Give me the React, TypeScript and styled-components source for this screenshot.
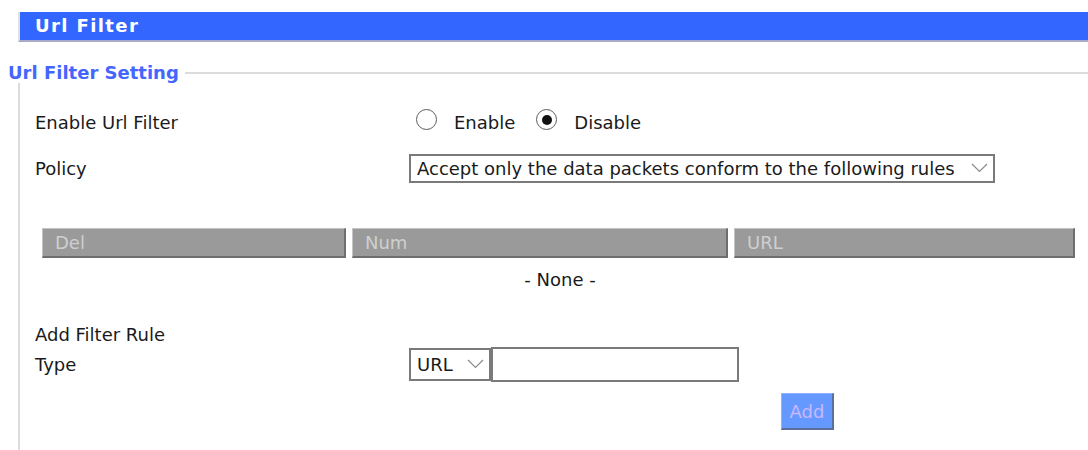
import React, { useState } from 'react'
import styled, { createGlobalStyle } from 'styled-components'

const GlobalStyle = createGlobalStyle`
  html, body {
    margin: 0;
    padding: 0;
    background: #ffffff;
  }
  body {
    font-family: 'DejaVu Sans', Verdana, sans-serif;
    color: #1a1a1a;
    font-size: 18px;
  }
`

const Page = styled.div`
  padding-top: 12px;
  width: 1088px;
  height: 450px;
  overflow: hidden;
`

const TitleBar = styled.div`
  margin-left: 18px;
  height: 28px;
  background: #3366ff;
  border-left: 2px solid #e0e0e0;
  border-bottom: 2px solid #a8aac8;
  color: #ffffff;
  font-weight: bold;
  font-size: 18px;
  line-height: 28px;
  padding-left: 15px;
  letter-spacing: 1.4px;
`

const Fieldset = styled.fieldset`
  margin: 20px 0 0 18px;
  padding: 16px 0 0 15px;
  border: none;
  border-top: 2px solid #dcdcdc;
  border-left: 2px solid #dcdcdc;
  min-height: 400px;
`

const Legend = styled.legend`
  margin-left: -27px;
  padding: 0 6px 0 0;
  color: #4466ff;
  font-weight: bold;
  font-size: 18px;
  line-height: 21px;
`

const FormRow = styled.div<{ $height: number }>`
  display: grid;
  grid-template-columns: 374px 1fr;
  align-items: center;
  height: ${(p) => p.$height}px;
`

const Label = styled.div`
  line-height: 22px;
  padding-top: 2px;
`

const RadioGroup = styled.div`
  display: flex;
  align-items: center;
  padding-left: 7px;
`

const RadioOption = styled.label`
  display: flex;
  align-items: center;
  margin-right: 21px;
  cursor: pointer;
`

const RadioDot = styled.span<{ $checked: boolean }>`
  width: 21px;
  height: 21px;
  box-sizing: border-box;
  border-radius: 50%;
  border: 1px solid #5c5c5c;
  background: #fff;
  display: inline-flex;
  align-items: center;
  justify-content: center;
  margin-right: 17px;
  margin-top: -5px;

  &::after {
    content: '';
    width: 10px;
    height: 10px;
    border-radius: 50%;
    background: ${(p) => (p.$checked ? '#111' : 'transparent')};
  }
`

const SelectBox = styled.div<{ $width: number; $height: number }>`
  width: ${(p) => p.$width}px;
  height: ${(p) => p.$height}px;
  box-sizing: border-box;
  border: 2px solid #7a7a7a;
  background: #fff;
  display: flex;
  align-items: center;
  justify-content: space-between;
  padding: 0 5px 0 6px;
`

const Chevron = () => (
  <svg width="17" height="10" viewBox="0 0 17 10" fill="none">
    <path d="M1 1 L8.5 8.5 L16 1" stroke="#8a8a8a" strokeWidth="1.2" />
  </svg>
)

const RuleTable = styled.div`
  display: grid;
  grid-template-columns: 304px 376px 341px;
  gap: 6px;
  margin: 37px 0 0 7px;
`

const HeadCell = styled.div`
  height: 30px;
  box-sizing: border-box;
  background: #9a9a9a;
  border-top: 1px solid #c4c4c4;
  border-left: 1px solid #c4c4c4;
  border-right: 2px solid #6e6e6e;
  border-bottom: 2px solid #6e6e6e;
  color: #cfcfcf;
  line-height: 27px;
  padding-left: 12px;
`

const EmptyNote = styled.div`
  text-align: center;
  width: 1050px;
  margin-top: 11px;
  line-height: 22px;
`

const SectionLabel = styled.div`
  margin-top: 33px;
  line-height: 22px;
`

const InlineFields = styled.div`
  display: flex;
  align-items: center;
`

const TextInput = styled.input`
  width: 248px;
  height: 35px;
  box-sizing: border-box;
  border: 2px solid #7a7a7a;
  outline: none;
  padding: 0 4px;
  font-family: inherit;
  font-size: 18px;
`

const ButtonRow = styled.div`
  padding-left: 746px;
  margin-top: 11px;
`

const AddButton = styled.button`
  width: 53px;
  height: 37px;
  background: #6699ff;
  border: none;
  border-right: 2px solid #5a6f99;
  border-bottom: 2px solid #5a6f99;
  border-top: 1px solid #8fb0ff;
  border-left: 1px solid #8fb0ff;
  color: #c8b8ff;
  font-family: inherit;
  font-size: 18px;
  padding: 0;
`

export default function App() {
  const [enabled, setEnabled] = useState(false)
  const [url, setUrl] = useState('')

  return (
    <Page>
      <GlobalStyle />
      <TitleBar>Url Filter</TitleBar>

      <Fieldset>
        <Legend>Url Filter Setting</Legend>

        <FormRow $height={46}>
          <Label>Enable Url Filter</Label>
          <RadioGroup>
            <RadioOption onClick={() => setEnabled(true)}>
              <RadioDot $checked={enabled} />
              Enable
            </RadioOption>
            <RadioOption onClick={() => setEnabled(false)}>
              <RadioDot $checked={!enabled} />
              Disable
            </RadioOption>
          </RadioGroup>
        </FormRow>

        <FormRow $height={46}>
          <Label>Policy</Label>
          <SelectBox $width={586} $height={29}>
            Accept only the data packets conform to the following rules
            <Chevron />
          </SelectBox>
        </FormRow>

        <RuleTable>
          <HeadCell>Del</HeadCell>
          <HeadCell>Num</HeadCell>
          <HeadCell>URL</HeadCell>
        </RuleTable>
        <EmptyNote>- None -</EmptyNote>

        <SectionLabel>Add Filter Rule</SectionLabel>
        <FormRow $height={36}>
          <Label>Type</Label>
          <InlineFields>
            <SelectBox $width={82} $height={33}>
              URL
              <Chevron />
            </SelectBox>
            <TextInput value={url} onChange={(e) => setUrl(e.target.value)} />
          </InlineFields>
        </FormRow>

        <ButtonRow>
          <AddButton>Add</AddButton>
        </ButtonRow>
      </Fieldset>
    </Page>
  )
}
